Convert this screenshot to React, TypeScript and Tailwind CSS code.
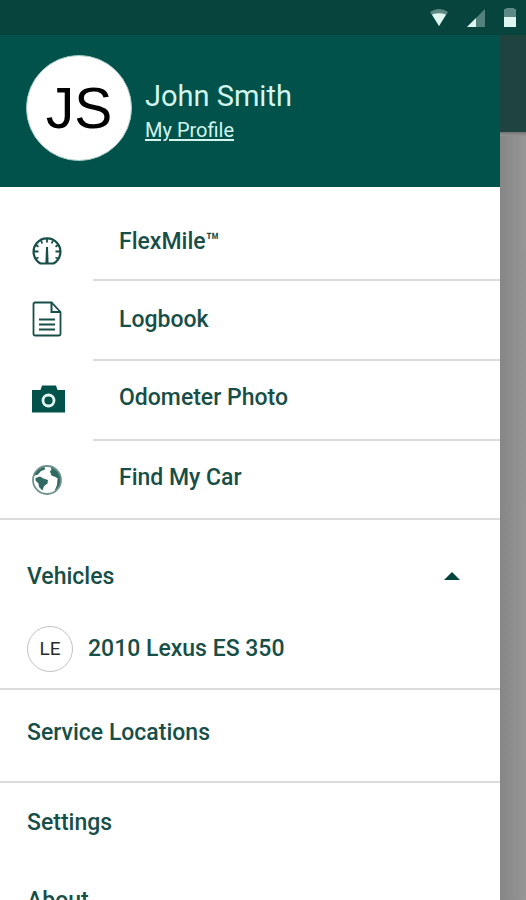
import type { ReactNode } from "react";

type NavRowProps = {
  icon: ReactNode;
  label: string;
  iconClass?: string;
  labelClass?: string;
  last?: boolean;
};

function GaugeIcon() {
  return (
    <svg width="30" height="28" viewBox="0 0 30 28" fill="none" stroke="currentColor" aria-hidden="true">
      <path d="M8.500 26.500A13.400 13.400 0 1 1 21.500 26.500Z" strokeWidth="2.200" strokeLinejoin="round" />
      <path
        d="M15 2v3.500M9 3.500l1.300 3M21 3.500l-1.300 3M4 8l2.500 1.800M26 8l-2.500 1.800M2 14.500h4.500M28 14.500h-4.500M4 21.500l2.500-1M26 21.500l-2.500-1"
        strokeWidth="1.800"
      />
      <path d="M14 10h2l.600 16h-3.200z" fill="currentColor" stroke="none" />
    </svg>
  );
}

function LogbookIcon() {
  return (
    <svg width="30" height="36" viewBox="0 0 30 36" fill="none" stroke="currentColor" aria-hidden="true">
      <path
        d="M3 1.500H19.500L28.500 11V33a1.500 1.500 0 0 1-1.500 1.500H3A1.500 1.500 0 0 1 1.500 33V3A1.500 1.500 0 0 1 3 1.500Z"
        strokeWidth="1.800"
      />
      <path d="M19.500 1.500V11h9" strokeWidth="2" />
      <path d="M7 18.500h16M7 23.500h16M7 28.500h16" strokeWidth="1.800" />
    </svg>
  );
}

function CameraIcon() {
  return (
    <svg width="33" height="28" viewBox="0 0 33 28" aria-hidden="true">
      <path d="M0 5h8.500l1.500-4.500h14l1.500 4.500H33V27.500H0z" fill="#00524a" />
      <circle cx="16.500" cy="15.500" r="5.500" fill="none" stroke="#e4f6f3" strokeWidth="2.800" />
    </svg>
  );
}

function GlobeIcon() {
  return (
    <svg width="30" height="30" viewBox="0 0 30 30" aria-hidden="true">
      <g fill="#2f6b62">
        <path d="M12.500 1.500C7 2.400 3 6 1.500 11l4.500-1.500 3-3.500 4-1.500z" />
        <path d="M3.500 13l4.500-1.500 3.500 2 4.500 1.500-.500 3.500-3.500 2.500-1.500 4.500-3.500-3.500-.500-3.500-3-3z" />
        <path d="M18.500 1.500c5 1.500 9 5.500 10 11l-2 1.500-3-2-4-1.500-1.500-4 1.500-2z" />
        <path d="M28.500 12c1 6-1.500 11-6 14l2.500-6 .500-6z" />
      </g>
      <circle cx="15" cy="15" r="14" fill="none" stroke="#6f918c" strokeWidth="1.800" />
    </svg>
  );
}

function StatusBar() {
  return (
    <div className="flex h-[35px] shrink-0 items-center justify-end gap-[19px] bg-[#07443d] pr-[10px] text-[#dff5f0]">
      <svg width="18" height="17" viewBox="0 0 18 17" role="img" aria-label="Wi-Fi">
        <path d="M0 3Q9-3 18 3L9 17z" fill="currentColor" fillOpacity="0.4" />
        <path d="M2 5.500Q9 3 16 5.500L9 17z" fill="currentColor" />
      </svg>
      <svg width="18" height="18" viewBox="0 0 18 18" role="img" aria-label="Signal">
        <path d="M18 0V18H0z" fill="currentColor" fillOpacity="0.35" />
        <path d="M9 9V18H0z" fill="currentColor" />
      </svg>
      <svg width="12" height="19" viewBox="0 0 12 19" role="img" aria-label="Battery">
        <path d="M2 0h8v1h2v8H0V1h2z" fill="currentColor" fillOpacity="0.4" />
        <path d="M0 9h12v10H0z" fill="currentColor" />
      </svg>
    </div>
  );
}

function NavRow({ icon, label, iconClass = "", labelClass = "", last = false }: NavRowProps) {
  return (
    <li>
      <a href="#" className={last ? "flex h-[79px] border-b-2 border-[#dcdcdc]" : "flex h-20"}>
        <span className={`flex w-[93px] shrink-0 items-center pl-8 ${iconClass}`}>{icon}</span>
        <span
          className={`flex flex-1 items-center pl-[26px] ${last ? "" : "border-b-2 border-[#dcdcdc]"} ${labelClass}`}
        >
          {label}
        </span>
      </a>
    </li>
  );
}

export default function App() {
  return (
    <div className="flex h-screen flex-col overflow-hidden bg-white font-['Roboto','Liberation_Sans',sans-serif]">
      <StatusBar />
      <div className="flex min-h-0 flex-1">
        <aside className="flex min-w-0 flex-1 flex-col bg-white">
          <header className="flex h-[152px] shrink-0 items-center bg-[#00524a] pb-1.5 pl-[26px]">
            <div className="flex size-[106px] shrink-0 items-center justify-center rounded-full border border-[#a9c9c4] bg-white font-['Liberation_Sans',sans-serif] text-[57px] leading-none text-black">
              JS
            </div>
            <div className="flex flex-col items-start pt-2 pl-[13px] text-[#d3f5ee]">
              <h1 className="text-[29px] leading-9">John Smith</h1>
              <a href="#" className="text-[20px] leading-8 underline underline-offset-2">
                My Profile
              </a>
            </div>
          </header>

          <nav className="min-h-0 flex-1 overflow-y-auto text-[23px] font-medium text-[#174f48] [scrollbar-width:none]">
            <ul className="pt-[14px]">
              <NavRow icon={<GaugeIcon />} iconClass="pt-5" label="FlexMile™" labelClass="pt-1" />
              <NavRow icon={<LogbookIcon />} iconClass="pb-1" label="Logbook" />
              <NavRow icon={<CameraIcon />} iconClass="pb-1" label="Odometer Photo" labelClass="pb-1" />
              <NavRow icon={<GlobeIcon />} label="Find My Car" labelClass="pb-0.5" last />
            </ul>

            <section className="border-b-2 border-[#dcdcdc] pt-[21px] pb-[3px]">
              <button
                type="button"
                aria-expanded="true"
                className="flex h-[72px] w-full items-center justify-between pr-10 pl-[27px]"
              >
                Vehicles
                <svg width="16" height="11" viewBox="0 0 16 11" fill="#00463e" aria-hidden="true">
                  <path d="M8 0l8 8H0z" />
                </svg>
              </button>
              <a href="#" className="flex h-[72px] items-center gap-[15px] pl-[27px]">
                <span className="flex size-[46px] items-center justify-center rounded-full border border-[#c4c1c4] text-[19px] font-normal text-[#2b2b2b]">
                  LE
                </span>
                2010 Lexus ES 350
              </a>
            </section>

            <a href="#" className="flex h-[93px] items-center border-b-2 border-[#dcdcdc] pb-1 pl-[27px]">
              Service Locations
            </a>
            <a href="#" className="flex h-20 items-center pl-[27px]">
              Settings
            </a>
            <a href="#" className="flex h-20 items-center pb-1 pl-[27px]">
              About
            </a>
          </nav>
        </aside>

        {/* dimmed page behind the open drawer */}
        <div className="flex w-[26px] shrink-0 flex-col">
          <div className="h-[97px] bg-[#1f433f]" />
          <div className="h-1 bg-linear-to-b from-[#747474] to-[#939393]" />
          <div className="flex-1 bg-linear-to-r from-[#868686] to-[#969696]" />
        </div>
      </div>
    </div>
  );
}
